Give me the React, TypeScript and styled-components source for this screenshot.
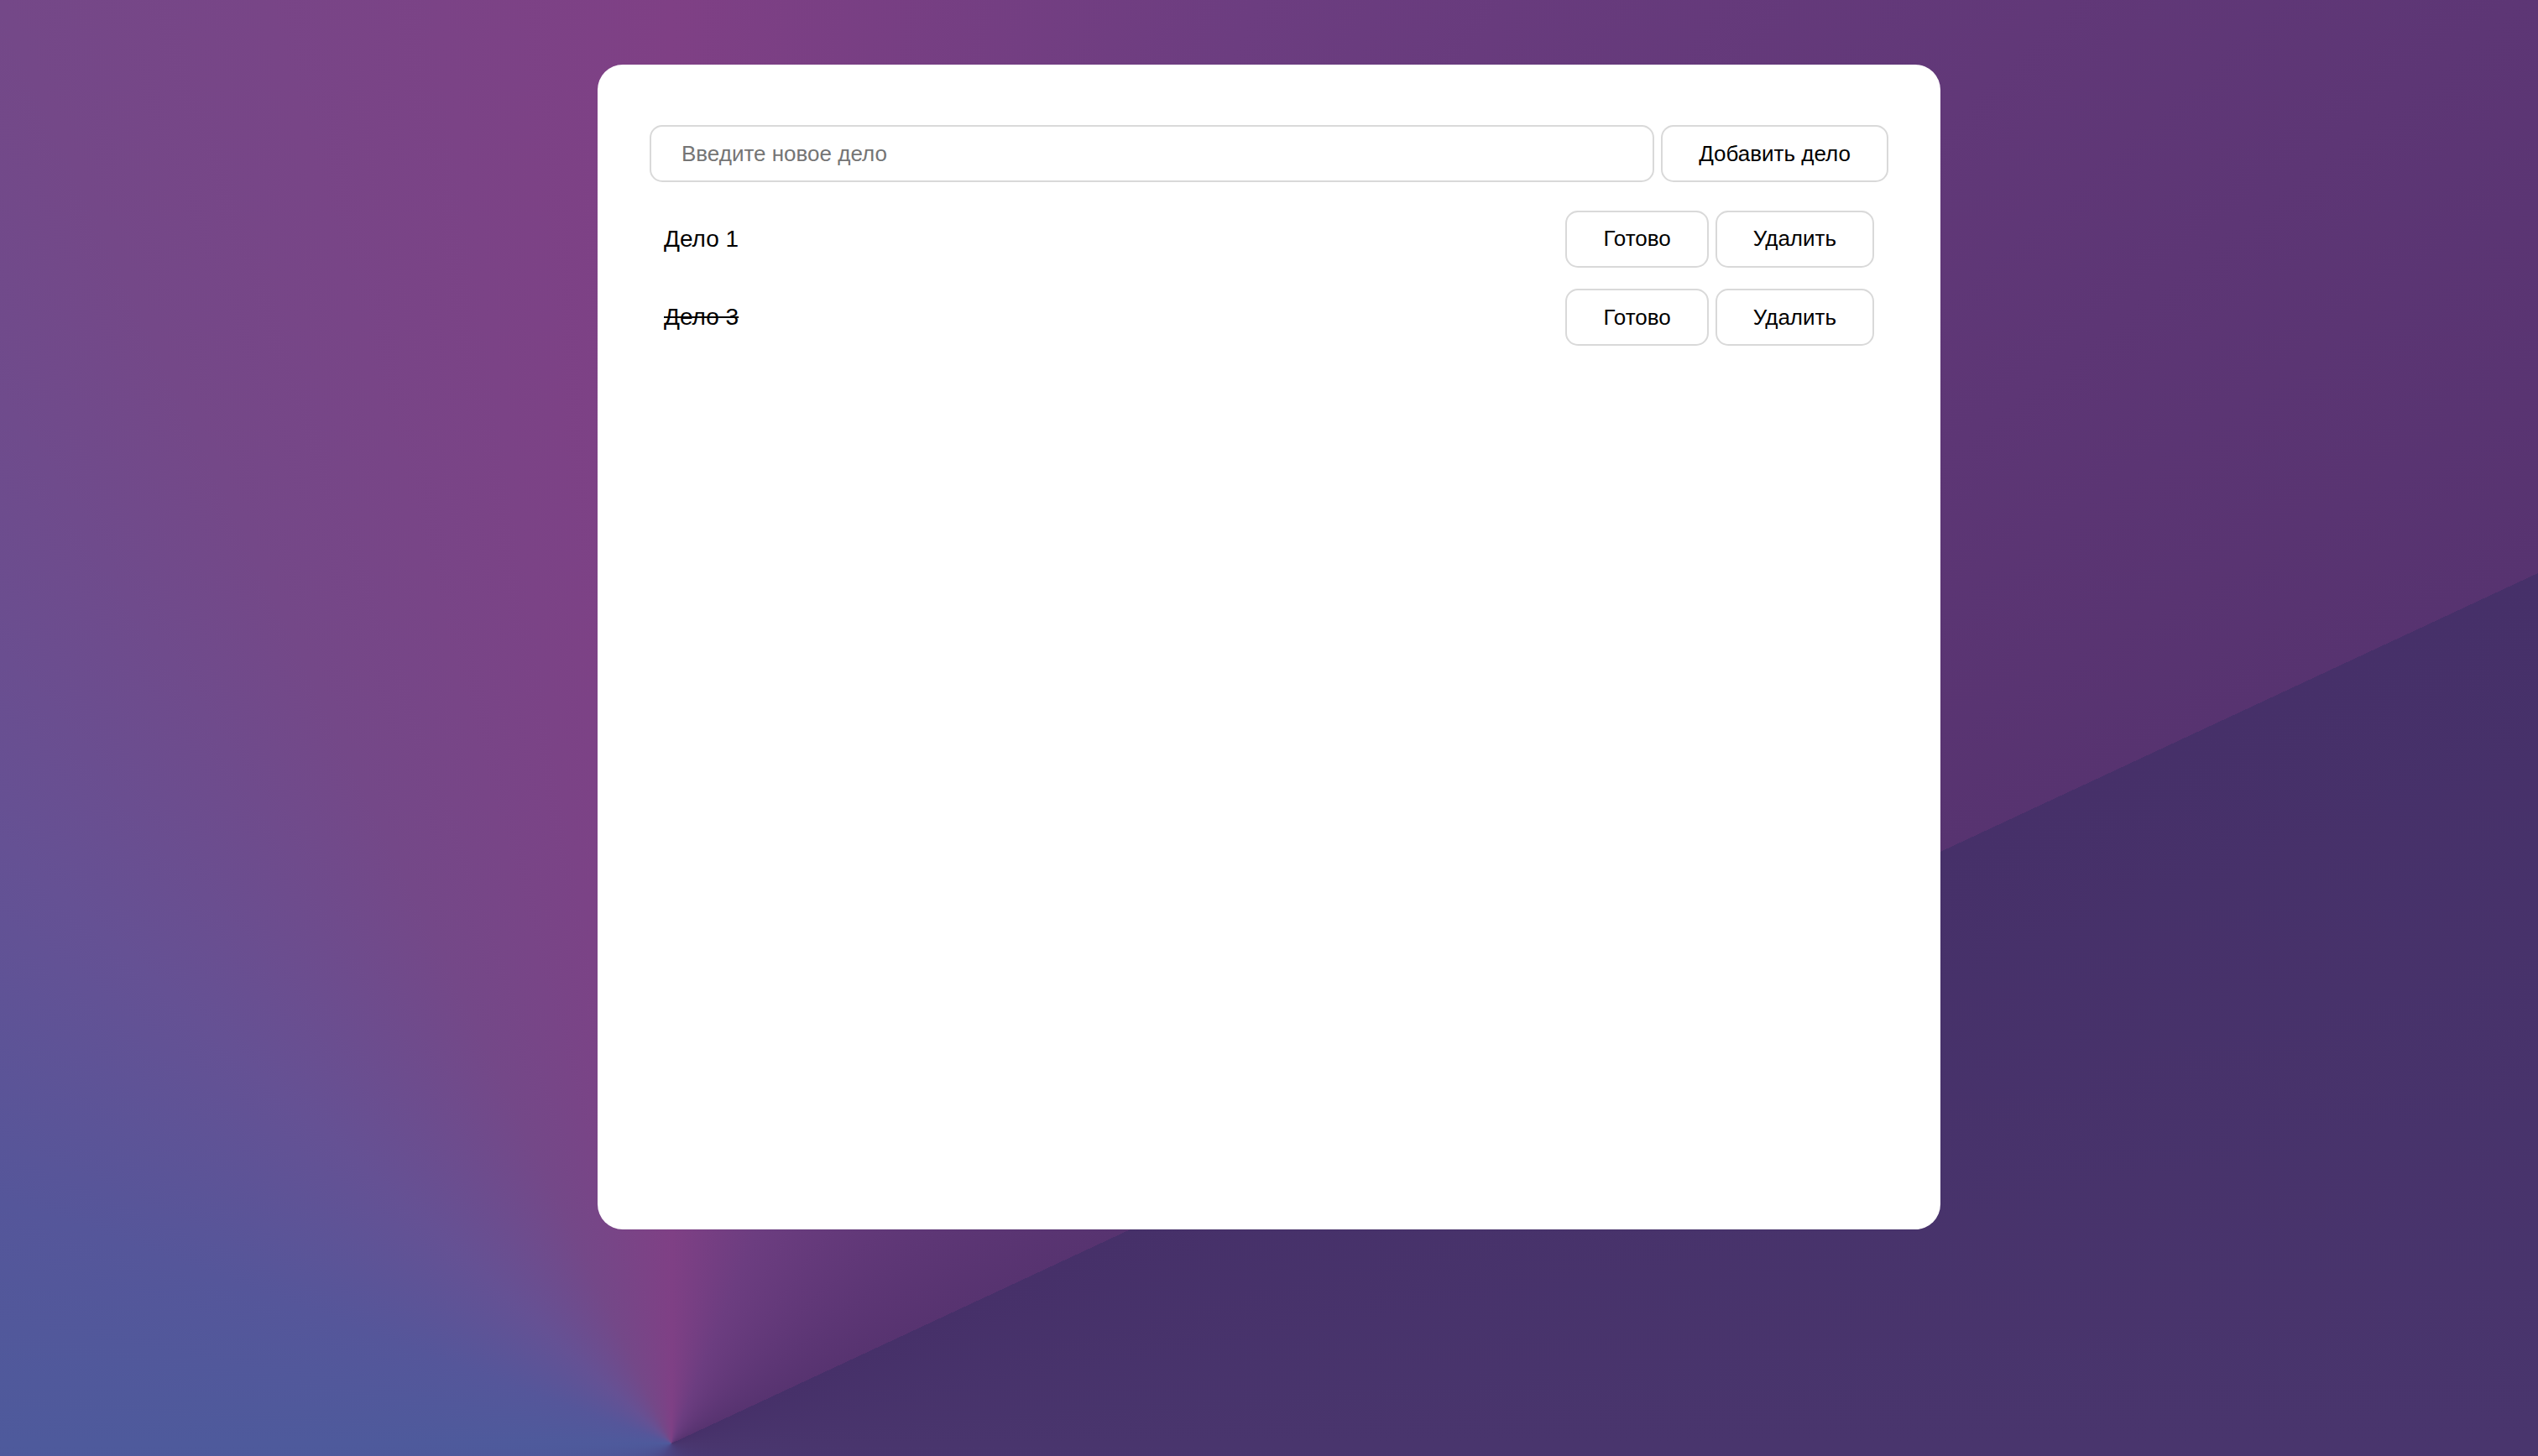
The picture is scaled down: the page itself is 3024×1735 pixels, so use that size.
import React, { useState } from "react";
import styled, { createGlobalStyle } from "styled-components";

const GlobalStyle = createGlobalStyle`
  html, body {
    margin: 0;
    padding: 0;
  }
  body {
    min-height: 100vh;
    font-family: "Liberation Sans", Arial, sans-serif;
    background: conic-gradient(
      from 65deg at 800px 1720px,
      #463069 0deg,
      #49356d 25deg,
      #4b4585 140deg,
      #4e5a9c 205deg,
      #55569a 225deg,
      #655194 247deg,
      #744888 270deg,
      #7f4085 295deg,
      #6c3d80 317deg,
      #5d3675 347deg,
      #573370 360deg
    );
    background-attachment: fixed;
  }
`;

const Page = styled.div`
  display: flex;
  justify-content: center;
  padding-top: 77px;
  min-height: 100vh;
  box-sizing: border-box;
`;

const Card = styled.main`
  width: 1600px;
  height: 80vh;
  box-sizing: border-box;
  background: #ffffff;
  border-radius: 30px;
  padding: 72px 62px 0;
  display: flex;
  flex-direction: column;
`;

const Form = styled.form`
  display: flex;
  gap: 8px;
  margin: 0;
`;

const Input = styled.input`
  flex: 1;
  height: 68px;
  box-sizing: border-box;
  border: 2px solid #d9d9d9;
  border-radius: 15px;
  padding: 0 36px;
  font-family: "Liberation Sans", Arial, sans-serif;
  font-size: 26px;
  color: #000;
  outline: none;
  &::placeholder {
    color: #757575;
  }
`;

const Button = styled.button`
  height: 68px;
  box-sizing: border-box;
  border: 2px solid #d9d9d9;
  border-radius: 15px;
  background: #ffffff;
  padding: 0 43px;
  font-family: "Liberation Sans", Arial, sans-serif;
  font-size: 26px;
  color: #000;
  cursor: pointer;
  white-space: nowrap;
`;

const List = styled.ul`
  list-style: none;
  margin: 21px 0 0;
  padding: 0;
`;

const Row = styled.li`
  display: flex;
  align-items: center;
  justify-content: space-between;
  padding: 12.8px 17px;
`;

const Title = styled.span<{ $done: boolean }>`
  font-size: 28px;
  color: #000;
  text-decoration: ${(p) => (p.$done ? "line-through" : "none")};
`;

const Actions = styled.div`
  display: flex;
  gap: 8px;
`;

type Todo = { id: number; text: string; done: boolean };

export default function App() {
  const [todos, setTodos] = useState<Todo[]>([
    { id: 1, text: "Дело 1", done: false },
    { id: 3, text: "Дело 3", done: true },
  ]);
  const [value, setValue] = useState("");

  const add = (e: React.FormEvent) => {
    e.preventDefault();
    if (!value.trim()) return;
    setTodos([...todos, { id: Date.now(), text: value, done: false }]);
    setValue("");
  };

  return (
    <>
      <GlobalStyle />
      <Page>
        <Card>
          <Form onSubmit={add}>
            <Input
              placeholder="Введите новое дело"
              value={value}
              onChange={(e) => setValue(e.target.value)}
            />
            <Button type="submit">Добавить дело</Button>
          </Form>
          <List>
            {todos.map((t) => (
              <Row key={t.id}>
                <Title $done={t.done}>{t.text}</Title>
                <Actions>
                  <Button
                    onClick={() =>
                      setTodos(todos.map((x) => (x.id === t.id ? { ...x, done: !x.done } : x)))
                    }
                  >
                    Готово
                  </Button>
                  <Button onClick={() => setTodos(todos.filter((x) => x.id !== t.id))}>
                    Удалить
                  </Button>
                </Actions>
              </Row>
            ))}
          </List>
        </Card>
      </Page>
    </>
  );
}
